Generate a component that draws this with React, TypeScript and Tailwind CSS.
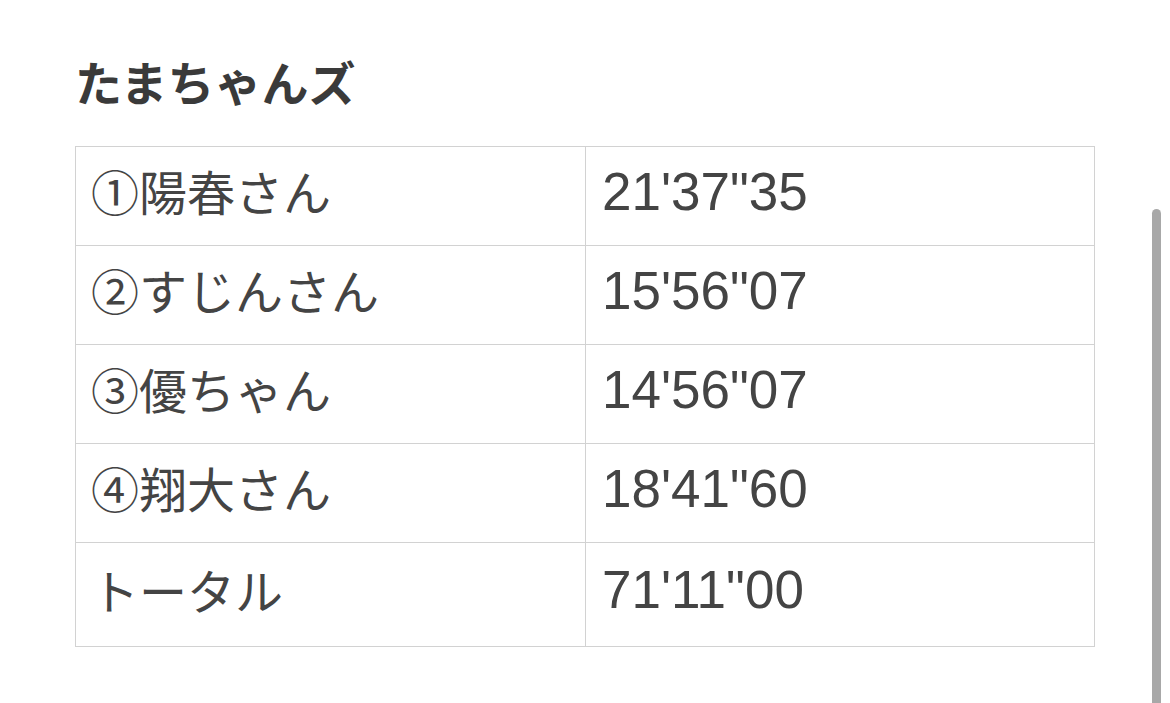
import React from "react";

const rows: [string, string][] = [
  ["①陽春さん", "21'37\"35"],
  ["②すじんさん", "15'56\"07"],
  ["③優ちゃん", "14'56\"07"],
  ["④翔大さん", "18'41\"60"],
  ["トータル", "71'11\"00"],
];

export default function App() {
  return (
    <div
      className="relative w-[1170px] h-[703px] overflow-hidden bg-white text-[#444444]"
      style={{ fontFamily: '"Noto Sans CJK JP", "Noto Sans", sans-serif' }}
    >
      <div className="px-[75px] pt-[56px]">
        <h2 className="text-[47px] leading-[50px] font-bold text-[#3a3a3a] pl-0">たまちゃんズ</h2>
        <table className="mt-[40px] w-[1020px] border-collapse table-fixed">
          <tbody>
            {rows.map(([name, time], i) => (
              <tr key={i} className={i === rows.length - 1 ? "h-[104px]" : "h-[99px]"}>
                <td className="w-[510px] border border-[#d2d2d2] pl-[15px] pb-[12px] text-[48px] leading-none align-middle">
                  {name}
                </td>
                <td
                  className="border border-[#d2d2d2] pl-[16px] pb-[10px] text-[53px] leading-none align-middle"
                  style={{ fontFamily: '"Liberation Sans", Arial, sans-serif' }}
                >
                  {time}
                </td>
              </tr>
            ))}
          </tbody>
        </table>
      </div>
      <div className="absolute left-[1152px] top-[209px] w-[9px] h-[520px] rounded-full bg-[#a8a8a8]" />
    </div>
  );
}
